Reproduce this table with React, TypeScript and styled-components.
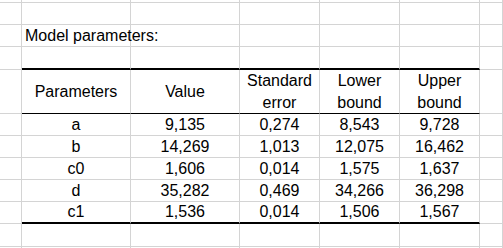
import React from 'react';
import styled, { createGlobalStyle } from 'styled-components';

const GlobalStyle = createGlobalStyle`
    html, body {
        margin: 0;
        padding: 0;
        background: #ffffff;
    }
    body {
        font-family: 'Liberation Sans', Arial, sans-serif;
        overflow: hidden;
    }
`;

const GRID = '#d4d4d4';

/* column widths, last one takes the rest */
const COLS = [22, 109, 109, 80, 80, 80, 0];

type Edge = 'grid' | 'thin' | 'thick';

const Sheet = styled.div`
    width: 503px;
    height: 248px;
    overflow: hidden;
    display: flex;
    flex-direction: column;
    font-size: 16px;
    color: #000;
`;

const Row = styled.div<{ $h: number }>`
    display: flex;
    flex: none;
    height: ${props => props.$h}px;
`;

const Cell = styled.div<{ $w: number; $edge?: Edge; $center?: boolean }>`
    box-sizing: border-box;
    ${props => (props.$w ? `width: ${props.$w}px; flex: none;` : 'flex: 1;')}
    height: 100%;
    border-right: 1px solid ${GRID};
    border-bottom: ${props =>
        props.$edge === 'thick'
            ? '2px solid #000'
            : props.$edge === 'thin'
            ? '1px solid #000'
            : `1px solid ${GRID}`};
    display: flex;
    align-items: flex-end;
    justify-content: ${props => (props.$center ? 'center' : 'flex-start')};
    padding: 0 3px 1px;
    line-height: 18px;
    white-space: nowrap;
`;

/* header cells are centred both ways and may wrap onto two lines */
const HeadCell = styled(Cell)`
    align-items: center;
    text-align: center;
    line-height: 22px;
    padding: 1px 2px 0;
    white-space: normal;
`;

const params = [
    ['a', '9,135', '0,274', '8,543', '9,728'],
    ['b', '14,269', '1,013', '12,075', '16,462'],
    ['c0', '1,606', '0,014', '1,575', '1,637'],
    ['d', '35,282', '0,469', '34,266', '36,298'],
    ['c1', '1,536', '0,014', '1,506', '1,567'],
];

const headers = ['Parameters', 'Value', 'Standard error', 'Lower bound', 'Upper bound'];

/* an empty sheet row, with the table columns getting an edge if asked */
const BlankRow = ({ h, edge }: { h: number; edge?: Edge }) => (
    <Row $h={h}>
        {COLS.map((w, i) => (
            <Cell key={i} $w={w} $edge={i > 0 && i < 6 ? edge : 'grid'} />
        ))}
    </Row>
);

const App = () => {
    return (
        <>
            <GlobalStyle />
            <Sheet>
                <BlankRow h={3} />
                <BlankRow h={22} />
                <Row $h={22}>
                    <Cell $w={COLS[0]} />
                    <Cell $w={COLS[1]}>Model parameters:</Cell>
                    {COLS.slice(2).map((w, i) => (
                        <Cell key={i} $w={w} />
                    ))}
                </Row>
                <BlankRow h={23} edge="thick" />
                <Row $h={44}>
                    <Cell $w={COLS[0]} />
                    {headers.map((t, i) => (
                        <HeadCell key={t} $w={COLS[i + 1]} $edge="thin" $center>
                            {t}
                        </HeadCell>
                    ))}
                    <Cell $w={0} />
                </Row>
                {params.map((r, ri) => (
                    <Row $h={22} key={r[0]}>
                        <Cell $w={COLS[0]} />
                        {r.map((v, i) => (
                            <Cell
                                key={i}
                                $w={COLS[i + 1]}
                                $edge={ri === params.length - 1 ? 'thick' : 'grid'}
                                $center
                            >
                                {v}
                            </Cell>
                        ))}
                        <Cell $w={0} />
                    </Row>
                ))}
                <BlankRow h={23} />
                <BlankRow h={22} />
            </Sheet>
        </>
    );
};

export default App;
